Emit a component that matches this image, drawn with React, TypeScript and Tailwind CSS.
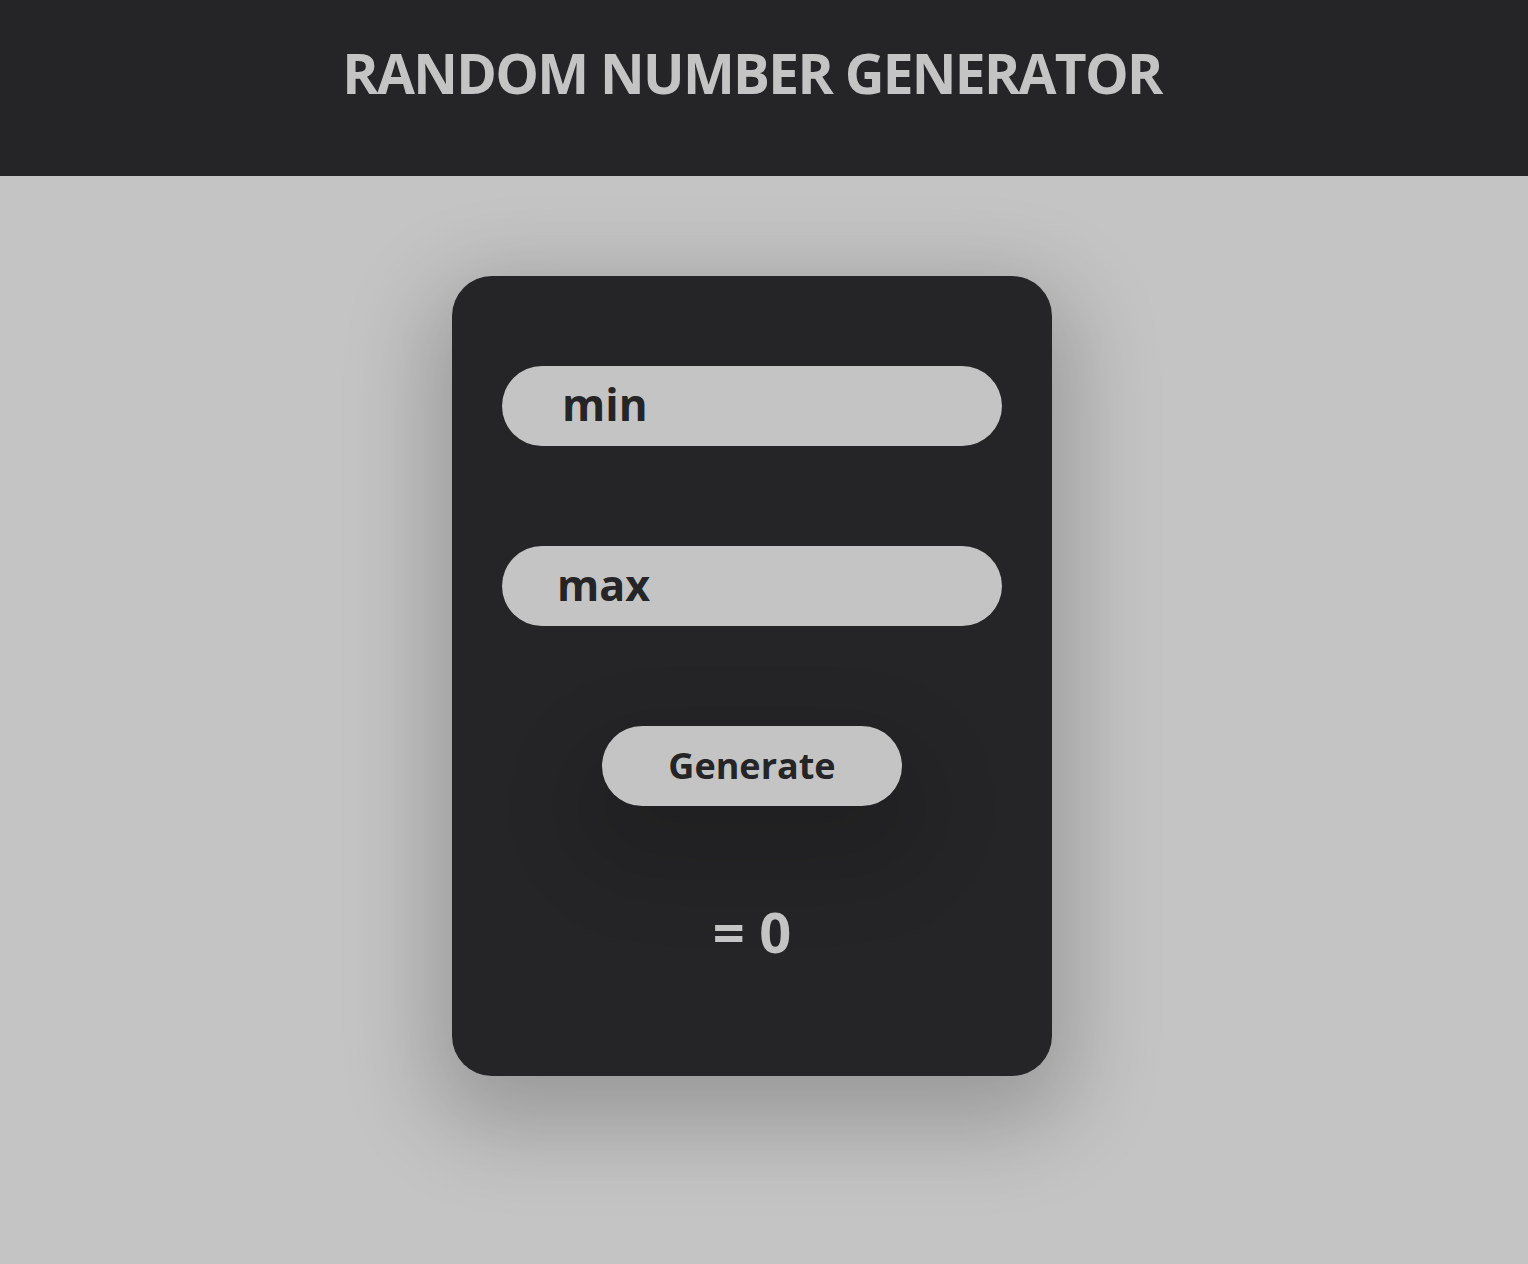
export default function App() {
  const font = { fontFamily: '"Open Sans", "Noto Sans", sans-serif' };
  return (
    <div className="min-h-[1264px] w-full bg-[#c4c4c4]" style={font}>
      <header className="h-[176px] w-full bg-[#252527]">
        <div className="w-[1504px] pt-[39px] text-center">
          <h1 className="text-[55px] font-bold leading-[68px] tracking-[-1.7px] text-[#c4c4c4]">
            RANDOM NUMBER GENERATOR
          </h1>
        </div>
      </header>
      <main className="w-[1504px] flex justify-center pt-[100px]">
        <div className="w-[600px] h-[800px] rounded-[40px] bg-[#252527] shadow-[0_30px_90px_20px_rgba(0,0,0,0.22)] flex flex-col items-center pt-[90px]">
          <input
            placeholder="min"
            className="w-[500px] h-[80px] rounded-full bg-[#c4c4c4] pl-[60px] pb-[4px] text-[44px] font-bold text-[#252527] placeholder:text-[#252527] outline-none"
          />
          <input
            placeholder="max"
            className="mt-[100px] w-[500px] h-[80px] rounded-full bg-[#c4c4c4] pl-[55px] pb-[4px] text-[43px] font-bold text-[#252527] placeholder:text-[#252527] outline-none"
          />
          <button className="mt-[100px] w-[300px] h-[80px] rounded-full bg-[#c4c4c4] text-[36px] font-bold text-[#252527] shadow-[0_40px_80px_30px_rgba(0,0,0,0.12)]">
            Generate
          </button>
          <div className="mt-[91px] text-[56px] font-bold leading-[68px] text-[#c4c4c4]">= 0</div>
        </div>
      </main>
    </div>
  );
}
